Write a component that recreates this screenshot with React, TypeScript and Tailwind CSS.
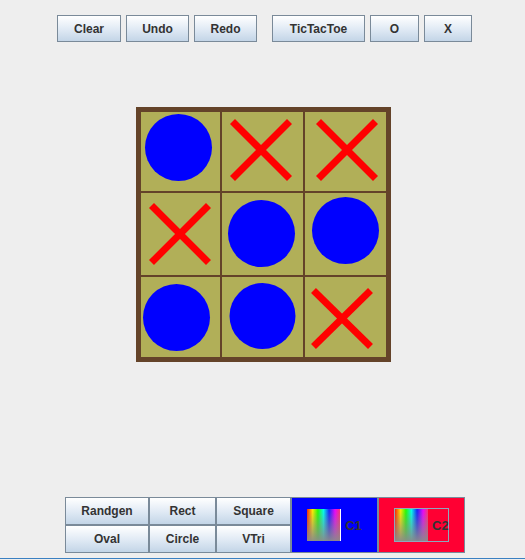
import React from 'react';

type Mark =
    | { kind: 'O'; cx: number; cy: number; r: number }
    | { kind: 'X'; x1: number; y1: number; x2: number; y2: number };

const colWidths = [79, 81, 81];
const rowHeights = [79, 82, 80];

const cells: Mark[] = [
    { kind: 'O', cx: 37.5, cy: 35.5, r: 33.5 },
    { kind: 'X', x1: 10.5, y1: 9.5, x2: 67.5, y2: 66.5 },
    { kind: 'X', x1: 13.5, y1: 9.5, x2: 70.5, y2: 66.5 },
    { kind: 'X', x1: 10.5, y1: 12.5, x2: 67.5, y2: 69.5 },
    { kind: 'O', cx: 39.5, cy: 40.5, r: 33.5 },
    { kind: 'O', cx: 40.5, cy: 37.5, r: 33.5 },
    { kind: 'O', cx: 35.5, cy: 40.5, r: 33.5 },
    { kind: 'O', cx: 40.5, cy: 39, r: 33 },
    { kind: 'X', x1: 8.5, y1: 13.5, x2: 65.5, y2: 69.5 },
];

const btn =
    'flex items-center justify-center border border-[#7a8a99] bg-[linear-gradient(to_bottom,#ffffff,#dfe9f4_55%,#c3d5e7)] text-[12px] font-bold text-[#333333] h-[27px]';

const gridBtn =
    'flex items-center justify-center border border-[#7a8a99] bg-[linear-gradient(to_bottom,#ffffff,#dfe9f4_55%,#c3d5e7)] text-[12px] font-bold text-[#333333] h-[28px]';

const Swatch: React.FC<{ id: string }> = ({ id }) => (
    <svg width="33" height="32" className="block shrink-0">
        <defs>
            <linearGradient id={`hue-${id}`} x1="0" y1="0" x2="1" y2="0">
                <stop offset="0" stopColor="#ff2000" />
                <stop offset="0.17" stopColor="#ffee00" />
                <stop offset="0.33" stopColor="#22ff00" />
                <stop offset="0.5" stopColor="#00ffee" />
                <stop offset="0.67" stopColor="#1020ff" />
                <stop offset="0.85" stopColor="#ee00ff" />
                <stop offset="1" stopColor="#ff3070" />
            </linearGradient>
            <linearGradient id={`fade-${id}`} x1="0" y1="0" x2="0" y2="1">
                <stop offset="0" stopColor="#8a8a8a" stopOpacity="0" />
                <stop offset="1" stopColor="#8a8a8a" stopOpacity="0.95" />
            </linearGradient>
        </defs>
        <rect width="33" height="32" fill={`url(#hue-${id})`} />
        <rect width="33" height="32" fill={`url(#fade-${id})`} />
    </svg>
);

const App: React.FC = () => {
    return (
        <div className="w-[525px] h-[560px] bg-[#eeeeee] flex flex-col font-['Liberation_Sans',Arial,sans-serif] overflow-hidden">
            {/* top toolbar */}
            <div className="flex pt-[15px] pl-[57px]">
                <div className="flex gap-[5px]">
                    <div className={`${btn} w-[64px]`}>Clear</div>
                    <div className={`${btn} w-[63px]`}>Undo</div>
                    <div className={`${btn} w-[63px]`}>Redo</div>
                </div>
                <div className="flex gap-[5px] ml-[15px]">
                    <div className={`${btn} w-[93px]`}>TicTacToe</div>
                    <div className={`${btn} w-[49px]`}>O</div>
                    <div className={`${btn} w-[48px]`}>X</div>
                </div>
            </div>

            {/* board */}
            <div className="mt-[65px] ml-[136px] w-[255px] h-[255px] border-[5px] border-[#644329] bg-[#644329] grid grid-cols-[79px_81px_81px] grid-rows-[79px_82px_80px] gap-[2px]">
                {cells.map((m, i) => {
                    const w = colWidths[i % 3];
                    const h = rowHeights[Math.floor(i / 3)];
                    return (
                        <div key={i} className="bg-[#b1af58]">
                            <svg width={w} height={h} className="block">
                                {m.kind === 'O' ? (
                                    <circle cx={m.cx} cy={m.cy} r={m.r} fill="#0000ff" />
                                ) : (
                                    <g stroke="#ff0000" strokeWidth="7">
                                        <line x1={m.x1} y1={m.y1} x2={m.x2} y2={m.y2} />
                                        <line x1={m.x1} y1={m.y2} x2={m.x2} y2={m.y1} />
                                    </g>
                                )}
                            </svg>
                        </div>
                    );
                })}
            </div>

            {/* bottom controls */}
            <div className="flex mt-[135px] ml-[65px]">
                <div className="grid grid-cols-[84px_67px_75px]">
                    <div className={gridBtn}>Randgen</div>
                    <div className={gridBtn}>Rect</div>
                    <div className={gridBtn}>Square</div>
                    <div className={gridBtn}>Oval</div>
                    <div className={gridBtn}>Circle</div>
                    <div className={gridBtn}>VTri</div>
                </div>
                <div className="w-[87px] h-[56px] border border-[#7a8a99] bg-[#0000ff] flex items-center justify-center gap-[4px]">
                    <div className="flex">
                        <Swatch id="c1" />
                        <div className="w-px h-[32px] bg-white" />
                    </div>
                    <span className="text-[13px] font-bold text-[#333333] leading-none">C1</span>
                </div>
                <div className="w-[87px] h-[56px] border border-[#7a8a99] bg-[#ff0033] flex items-center justify-center">
                    <div className="w-[55px] h-[34px] border border-[#8ea7bd] flex items-center">
                        <Swatch id="c2" />
                        <div className="w-px h-[32px] bg-white" />
                        <span className="ml-[4px] text-[13px] font-bold text-[#333333] leading-none whitespace-nowrap">C2</span>
                    </div>
                </div>
            </div>

            <div className="mt-[5px] h-px bg-[#3a80c2]" />
        </div>
    );
};

export default App;
